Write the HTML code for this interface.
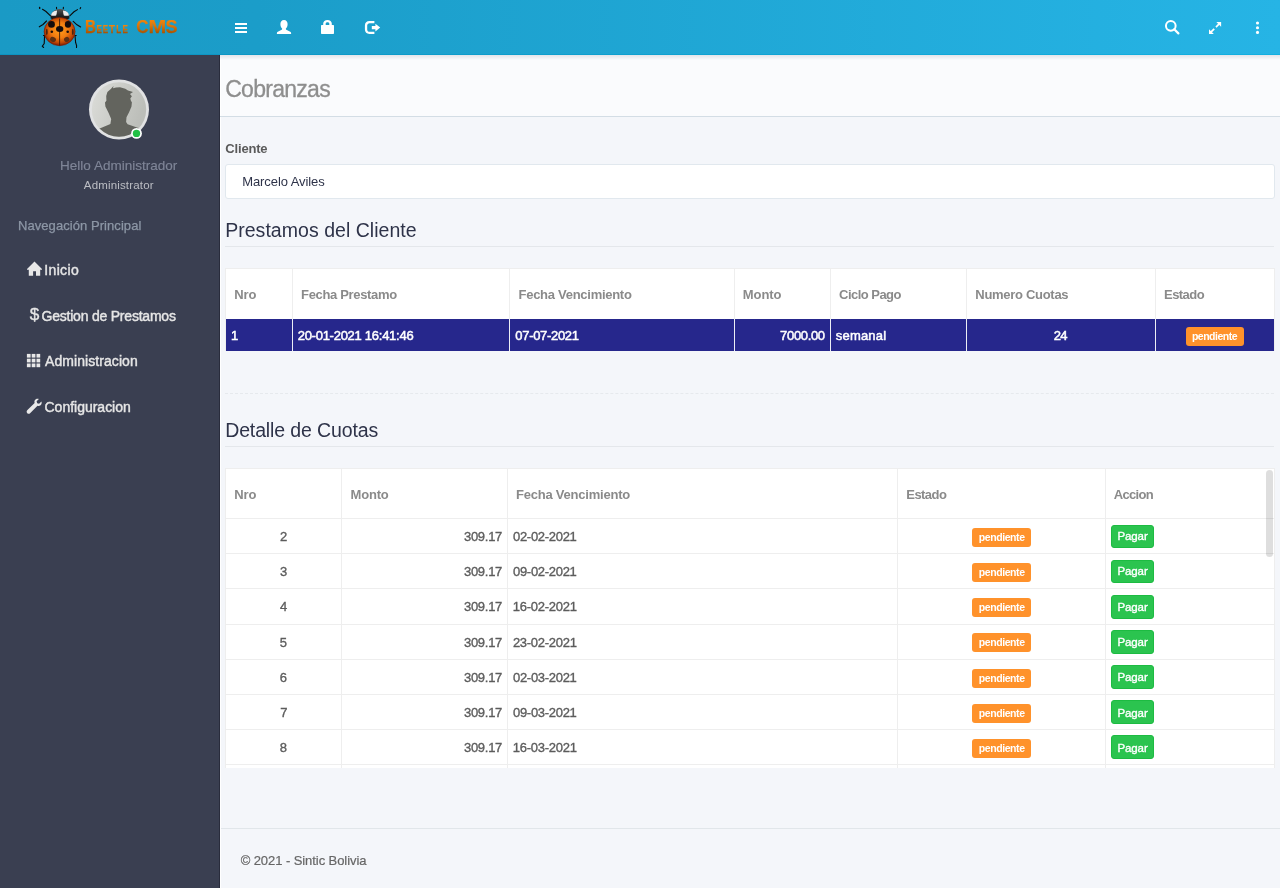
<!DOCTYPE html>
<html lang="es">
<head>
<meta charset="utf-8">
<title>Cobranzas</title>
<style>
*{box-sizing:border-box;margin:0;padding:0}
html,body{width:1280px;height:888px;overflow:hidden}
body{font-family:"Liberation Sans",sans-serif;font-size:13px;color:#5a5a5a;background:#f4f6fa;position:relative}
.t{position:absolute;white-space:nowrap;line-height:1;display:block}
#hdr{position:absolute;left:0;top:0;width:1280px;height:55px;background:linear-gradient(90deg,#1a9ac5 0%,#1b9dc9 20%,#26b4e5 100%)}
#hdrl{position:absolute;left:0;top:54px;width:1280px;height:1px;background:linear-gradient(90deg,#0c93c0 0%,#0c97c5 20%,#12b0e1 100%)}
#side{position:absolute;left:0;top:55px;width:220px;height:833px;background:#3a3f51;border-right:1px solid #292c3c}
#wl{position:absolute;left:220px;top:55px;width:1px;height:833px;background:#fff}
#phead{position:absolute;left:221px;top:55px;width:1059px;height:62px;background:#fafbfd;border-bottom:1px solid #d3dde5}
#pshadow{position:absolute;left:220px;top:55px;width:1060px;height:5px;background:linear-gradient(#e2e4e9,rgba(250,251,253,0))}
.hr{position:absolute;left:225px;width:1049px;height:1px;background:#e4e7eb}
#inp{position:absolute;left:225px;top:164px;width:1050px;height:35px;background:#fff;border:1px solid #e1e8ee;border-radius:3px}
.box{position:absolute;background:#fff}
.vl{position:absolute;width:1px;background:#eee}
.hl{position:absolute;height:1px;background:#eee}
.badge{position:absolute;background:#ff922b;border-radius:3px}
.btn{position:absolute;background:#2bc44f;border:1px solid #1dbb42;border-radius:3px}
svg{position:absolute;overflow:visible}
</style>
</head>
<body>
<div id="hdr"></div><div id="hdrl"></div>
<div id="side"></div>
<div id="wl"></div>
<div id="phead"></div>
<div id="pshadow"></div>
<div style="position:absolute;left:220px;top:116px;width:1px;height:1px;background:#d3dde5"></div>
<div class="hr" style="top:246px"></div>
<div class="hr" style="top:446px"></div>
<div class="hr" style="top:828px;left:221px;width:1059px;background:#e1e6ea"></div>
<div id="inp"></div>

<div style="position:absolute;left:225px;top:393px;width:1049px;height:0;border-top:1px dashed #e6e9ed"></div>
<div class="box" style="left:225px;top:268px;width:1050px;height:83px;border:1px solid #eee"></div>
<div style="position:absolute;left:226px;top:319px;width:1048px;height:32px;background:#26278c"></div>
<div class="vl" style="left:292px;top:269px;height:50px"></div>
<div class="vl" style="left:292px;top:319px;height:32px;background:#eceef5"></div>
<div class="vl" style="left:509px;top:269px;height:50px"></div>
<div class="vl" style="left:509px;top:319px;height:32px;background:#eceef5"></div>
<div class="vl" style="left:734px;top:269px;height:50px"></div>
<div class="vl" style="left:734px;top:319px;height:32px;background:#eceef5"></div>
<div class="vl" style="left:830px;top:269px;height:50px"></div>
<div class="vl" style="left:830px;top:319px;height:32px;background:#eceef5"></div>
<div class="vl" style="left:966px;top:269px;height:50px"></div>
<div class="vl" style="left:966px;top:319px;height:32px;background:#eceef5"></div>
<div class="vl" style="left:1155px;top:269px;height:50px"></div>
<div class="vl" style="left:1155px;top:319px;height:32px;background:#eceef5"></div>
<div class="badge" style="left:1186px;top:327px;width:58px;height:19px"></div>
<div class="box" style="left:225px;top:468px;width:1050px;height:300px;border:1px solid #eee;border-bottom:0"></div>
<div class="vl" style="left:341px;top:469px;height:299px"></div>
<div class="vl" style="left:507px;top:469px;height:299px"></div>
<div class="vl" style="left:897px;top:469px;height:299px"></div>
<div class="vl" style="left:1105px;top:469px;height:299px"></div>
<div class="hl" style="left:226px;top:518px;width:1048px"></div>
<div class="hl" style="left:226px;top:553px;width:1048px"></div>
<div class="hl" style="left:226px;top:588px;width:1048px"></div>
<div class="hl" style="left:226px;top:624px;width:1048px"></div>
<div class="hl" style="left:226px;top:659px;width:1048px"></div>
<div class="hl" style="left:226px;top:694px;width:1048px"></div>
<div class="hl" style="left:226px;top:729px;width:1048px"></div>
<div class="hl" style="left:226px;top:764px;width:1048px"></div>
<div class="badge" style="left:972px;top:528px;width:59px;height:19px"></div>
<div class="btn" style="left:1111px;top:525px;width:43px;height:23px"></div>
<div class="badge" style="left:972px;top:563px;width:59px;height:19px"></div>
<div class="btn" style="left:1111px;top:560px;width:43px;height:23px"></div>
<div class="badge" style="left:972px;top:598px;width:59px;height:19px"></div>
<div class="btn" style="left:1111px;top:595px;width:43px;height:24px"></div>
<div class="badge" style="left:972px;top:633px;width:59px;height:19px"></div>
<div class="btn" style="left:1111px;top:630px;width:43px;height:24px"></div>
<div class="badge" style="left:972px;top:669px;width:59px;height:19px"></div>
<div class="btn" style="left:1111px;top:665px;width:43px;height:24px"></div>
<div class="badge" style="left:972px;top:704px;width:59px;height:19px"></div>
<div class="btn" style="left:1111px;top:700px;width:43px;height:24px"></div>
<div class="badge" style="left:972px;top:739px;width:59px;height:19px"></div>
<div class="btn" style="left:1111px;top:735px;width:43px;height:24px"></div>
<div style="position:absolute;left:1266px;top:470px;width:7px;height:87px;border-radius:4px;background:rgba(0,0,0,.13)"></div>
<div id="tx" style="position:absolute;left:0;top:0;width:1280px;height:888px;will-change:transform">
<div class="t" id="t0" style="left:60.11px;top:159.00px;font-size:13.5px;color:#7f8597;-webkit-text-stroke:0.15px #7f8597">Hello Administrador</div>
<div class="t" id="t1" style="left:83.80px;top:180.00px;font-size:11.5px;color:#bcbec4;letter-spacing:0.166px">Administrator</div>
<div class="t" id="t2" style="left:17.99px;top:219.00px;font-size:13px;color:#8d97a6;-webkit-text-stroke:0.25px #8d97a6;letter-spacing:0.064px">Navegación Principal</div>
<div class="t" id="t3" style="left:44.31px;top:263.00px;font-size:14px;color:#e6e6e6;-webkit-text-stroke:0.42px #e6e6e6;letter-spacing:0.337px">Inicio</div>
<div class="t" id="t4" style="left:41.50px;top:309.00px;font-size:14px;color:#e6e6e6;-webkit-text-stroke:0.42px #e6e6e6;letter-spacing:-0.215px">Gestion de Prestamos</div>
<div class="t" id="t5" style="left:45.10px;top:354.00px;font-size:14px;color:#e6e6e6;-webkit-text-stroke:0.42px #e6e6e6;letter-spacing:0.063px">Administracion</div>
<div class="t" id="t6" style="left:44.50px;top:400.00px;font-size:14px;color:#e6e6e6;-webkit-text-stroke:0.42px #e6e6e6;letter-spacing:-0.008px">Configuracion</div>
<div class="t" id="t7" style="left:225.17px;top:78.00px;font-size:23px;color:#8e8e8e;-webkit-text-stroke:0.3px #8e8e8e;letter-spacing:-0.716px">Cobranzas</div>
<div class="t" id="t8" style="left:225.36px;top:142.00px;font-size:13px;color:#5a5a5a;font-weight:bold;letter-spacing:-0.197px">Cliente</div>
<div class="t" id="t9" style="left:242.21px;top:175.00px;font-size:13px;color:#2e3349;letter-spacing:-0.081px">Marcelo Aviles</div>
<div class="t" id="t10" style="left:225.18px;top:221.00px;font-size:19.5px;color:#2e3349;letter-spacing:0.036px">Prestamos del Cliente</div>
<div class="t" id="t11" style="left:225.18px;top:421.00px;font-size:19.5px;color:#2e3349;letter-spacing:-0.122px">Detalle de Cuotas</div>
<div class="t" id="t12" style="left:240.65px;top:854.00px;font-size:13px;color:#666;-webkit-text-stroke:0.2px #666;letter-spacing:-0.069px">© 2021 - Sintic Bolivia</div>
<div class="t" id="t13" style="left:234.29px;top:288.00px;font-size:13px;color:#8a8a8a;font-weight:bold;letter-spacing:-0.111px">Nro</div>
<div class="t" id="t14" style="left:301.04px;top:288.00px;font-size:13px;color:#8a8a8a;font-weight:bold;letter-spacing:-0.337px">Fecha Prestamo</div>
<div class="t" id="t15" style="left:518.54px;top:288.00px;font-size:13px;color:#8a8a8a;font-weight:bold;letter-spacing:-0.277px">Fecha Vencimiento</div>
<div class="t" id="t16" style="left:742.79px;top:288.00px;font-size:13px;color:#8a8a8a;font-weight:bold;letter-spacing:-0.064px">Monto</div>
<div class="t" id="t17" style="left:839.11px;top:288.00px;font-size:13px;color:#8a8a8a;font-weight:bold;letter-spacing:-0.535px">Ciclo Pago</div>
<div class="t" id="t18" style="left:975.29px;top:288.00px;font-size:13px;color:#8a8a8a;font-weight:bold;letter-spacing:-0.291px">Numero Cuotas</div>
<div class="t" id="t19" style="left:1164.04px;top:288.00px;font-size:13px;color:#8a8a8a;font-weight:bold;letter-spacing:-0.547px">Estado</div>
<div class="t" id="t20" style="left:230.91px;top:329.00px;font-size:13px;color:#ffffff;-webkit-text-stroke:0.5px #ffffff">1</div>
<div class="t" id="t21" style="left:297.70px;top:329.00px;font-size:13px;color:#ffffff;-webkit-text-stroke:0.5px #ffffff;letter-spacing:-0.266px">20-01-2021 16:41:46</div>
<div class="t" id="t22" style="left:515.34px;top:329.00px;font-size:13px;color:#ffffff;-webkit-text-stroke:0.5px #ffffff;letter-spacing:-0.316px">07-07-2021</div>
<div class="t" id="t23" style="left:780.12px;top:329.00px;font-size:13px;color:#ffffff;-webkit-text-stroke:0.5px #ffffff;letter-spacing:-0.335px">7000.00</div>
<div class="t" id="t24" style="left:835.81px;top:329.00px;font-size:13px;color:#ffffff;-webkit-text-stroke:0.5px #ffffff;letter-spacing:0.191px">semanal</div>
<div class="t" id="t25" style="left:1053.70px;top:329.00px;font-size:13px;color:#ffffff;-webkit-text-stroke:0.5px #ffffff;letter-spacing:-0.775px">24</div>
<div class="t" id="t26" style="left:234.29px;top:488.00px;font-size:13px;color:#8a8a8a;font-weight:bold;letter-spacing:-0.111px">Nro</div>
<div class="t" id="t27" style="left:350.54px;top:488.00px;font-size:13px;color:#8a8a8a;font-weight:bold;letter-spacing:-0.186px">Monto</div>
<div class="t" id="t28" style="left:516.04px;top:488.00px;font-size:13px;color:#8a8a8a;font-weight:bold;letter-spacing:-0.226px">Fecha Vencimiento</div>
<div class="t" id="t29" style="left:906.29px;top:488.00px;font-size:13px;color:#8a8a8a;font-weight:bold;letter-spacing:-0.547px">Estado</div>
<div class="t" id="t30" style="left:1113.82px;top:488.00px;font-size:13px;color:#8a8a8a;font-weight:bold;letter-spacing:-0.692px">Accion</div>
<div class="t" id="t31" style="left:280.08px;top:530.00px;font-size:13px;color:#5c5c5c;-webkit-text-stroke:0.35px #5c5c5c">2</div>
<div class="t" id="t32" style="left:463.95px;top:530.00px;font-size:13px;color:#5c5c5c;-webkit-text-stroke:0.35px #5c5c5c;letter-spacing:-0.269px">309.17</div>
<div class="t" id="t33" style="left:513.03px;top:530.00px;font-size:13px;color:#5c5c5c;-webkit-text-stroke:0.35px #5c5c5c;letter-spacing:-0.302px">02-02-2021</div>
<div class="t" id="t34" style="left:280.11px;top:565.00px;font-size:13px;color:#5c5c5c;-webkit-text-stroke:0.35px #5c5c5c">3</div>
<div class="t" id="t35" style="left:463.95px;top:565.00px;font-size:13px;color:#5c5c5c;-webkit-text-stroke:0.35px #5c5c5c;letter-spacing:-0.269px">309.17</div>
<div class="t" id="t36" style="left:513.03px;top:565.00px;font-size:13px;color:#5c5c5c;-webkit-text-stroke:0.35px #5c5c5c;letter-spacing:-0.302px">09-02-2021</div>
<div class="t" id="t37" style="left:279.88px;top:600.00px;font-size:13px;color:#5c5c5c;-webkit-text-stroke:0.35px #5c5c5c">4</div>
<div class="t" id="t38" style="left:463.95px;top:600.00px;font-size:13px;color:#5c5c5c;-webkit-text-stroke:0.35px #5c5c5c;letter-spacing:-0.269px">309.17</div>
<div class="t" id="t39" style="left:512.78px;top:600.00px;font-size:13px;color:#5c5c5c;-webkit-text-stroke:0.35px #5c5c5c;letter-spacing:-0.248px">16-02-2021</div>
<div class="t" id="t40" style="left:279.83px;top:636.00px;font-size:13px;color:#5c5c5c;-webkit-text-stroke:0.35px #5c5c5c">5</div>
<div class="t" id="t41" style="left:463.95px;top:636.00px;font-size:13px;color:#5c5c5c;-webkit-text-stroke:0.35px #5c5c5c;letter-spacing:-0.269px">309.17</div>
<div class="t" id="t42" style="left:512.91px;top:636.00px;font-size:13px;color:#5c5c5c;-webkit-text-stroke:0.35px #5c5c5c;letter-spacing:-0.282px">23-02-2021</div>
<div class="t" id="t43" style="left:279.85px;top:671.00px;font-size:13px;color:#5c5c5c;-webkit-text-stroke:0.35px #5c5c5c">6</div>
<div class="t" id="t44" style="left:463.95px;top:671.00px;font-size:13px;color:#5c5c5c;-webkit-text-stroke:0.35px #5c5c5c;letter-spacing:-0.269px">309.17</div>
<div class="t" id="t45" style="left:513.03px;top:671.00px;font-size:13px;color:#5c5c5c;-webkit-text-stroke:0.35px #5c5c5c;letter-spacing:-0.302px">02-03-2021</div>
<div class="t" id="t46" style="left:280.19px;top:706.00px;font-size:13px;color:#5c5c5c;-webkit-text-stroke:0.35px #5c5c5c">7</div>
<div class="t" id="t47" style="left:463.95px;top:706.00px;font-size:13px;color:#5c5c5c;-webkit-text-stroke:0.35px #5c5c5c;letter-spacing:-0.269px">309.17</div>
<div class="t" id="t48" style="left:513.03px;top:706.00px;font-size:13px;color:#5c5c5c;-webkit-text-stroke:0.35px #5c5c5c;letter-spacing:-0.302px">09-03-2021</div>
<div class="t" id="t49" style="left:279.83px;top:741.00px;font-size:13px;color:#5c5c5c;-webkit-text-stroke:0.35px #5c5c5c">8</div>
<div class="t" id="t50" style="left:463.95px;top:741.00px;font-size:13px;color:#5c5c5c;-webkit-text-stroke:0.35px #5c5c5c;letter-spacing:-0.269px">309.17</div>
<div class="t" id="t51" style="left:512.78px;top:741.00px;font-size:13px;color:#5c5c5c;-webkit-text-stroke:0.35px #5c5c5c;letter-spacing:-0.248px">16-03-2021</div>
<div class="t" id="t52" style="left:1191.89px;top:331.00px;font-size:10.5px;color:#fff;font-weight:bold;letter-spacing:-0.485px">pendiente</div>
<div class="t" id="t53" style="left:978.79px;top:532.00px;font-size:10.5px;color:#fff;font-weight:bold;letter-spacing:-0.417px">pendiente</div>
<div class="t" id="t54" style="left:1117.42px;top:531.00px;font-size:11.5px;color:#fff;-webkit-text-stroke:0.35px #fff;letter-spacing:-0.086px">Pagar</div>
<div class="t" id="t55" style="left:978.79px;top:567.00px;font-size:10.5px;color:#fff;font-weight:bold;letter-spacing:-0.417px">pendiente</div>
<div class="t" id="t56" style="left:1117.42px;top:566.00px;font-size:11.5px;color:#fff;-webkit-text-stroke:0.35px #fff;letter-spacing:-0.086px">Pagar</div>
<div class="t" id="t57" style="left:978.79px;top:602.00px;font-size:10.5px;color:#fff;font-weight:bold;letter-spacing:-0.417px">pendiente</div>
<div class="t" id="t58" style="left:1117.42px;top:602.00px;font-size:11.5px;color:#fff;-webkit-text-stroke:0.35px #fff;letter-spacing:-0.086px">Pagar</div>
<div class="t" id="t59" style="left:978.79px;top:637.00px;font-size:10.5px;color:#fff;font-weight:bold;letter-spacing:-0.417px">pendiente</div>
<div class="t" id="t60" style="left:1117.42px;top:637.00px;font-size:11.5px;color:#fff;-webkit-text-stroke:0.35px #fff;letter-spacing:-0.086px">Pagar</div>
<div class="t" id="t61" style="left:978.79px;top:673.00px;font-size:10.5px;color:#fff;font-weight:bold;letter-spacing:-0.417px">pendiente</div>
<div class="t" id="t62" style="left:1117.42px;top:672.00px;font-size:11.5px;color:#fff;-webkit-text-stroke:0.35px #fff;letter-spacing:-0.086px">Pagar</div>
<div class="t" id="t63" style="left:978.79px;top:708.00px;font-size:10.5px;color:#fff;font-weight:bold;letter-spacing:-0.417px">pendiente</div>
<div class="t" id="t64" style="left:1117.42px;top:708.00px;font-size:11.5px;color:#fff;-webkit-text-stroke:0.35px #fff;letter-spacing:-0.086px">Pagar</div>
<div class="t" id="t65" style="left:978.79px;top:743.00px;font-size:10.5px;color:#fff;font-weight:bold;letter-spacing:-0.417px">pendiente</div>
<div class="t" id="t66" style="left:1117.42px;top:743.00px;font-size:11.5px;color:#fff;-webkit-text-stroke:0.35px #fff;letter-spacing:-0.086px">Pagar</div>
</div>
<svg width="1280" height="888" viewBox="0 0 1280 888" style="left:0;top:0;will-change:transform">
<defs>
<linearGradient id="gt" x1="0" y1="0" x2="0" y2="1"><stop offset="0" stop-color="#ff8f0c"/><stop offset="0.45" stop-color="#e07608"/><stop offset="1" stop-color="#8f4300"/></linearGradient>
<radialGradient id="gb" cx="0.5" cy="0.45" r="0.55"><stop offset="0" stop-color="#ff9c1c"/><stop offset="0.5" stop-color="#f07c10"/><stop offset="0.8" stop-color="#c24a06"/><stop offset="1" stop-color="#7e1a00"/></radialGradient>
<linearGradient id="gh" x1="0" y1="0" x2="0" y2="1"><stop offset="0" stop-color="#555"/><stop offset="0.5" stop-color="#2a2a2a"/><stop offset="1" stop-color="#111"/></linearGradient>
<linearGradient id="ga" x1="0" y1="0" x2="1" y2="0.3"><stop offset="0" stop-color="#dcddd9"/><stop offset="1" stop-color="#bcbeb9"/></linearGradient>
<clipPath id="ca"><circle cx="119" cy="109.5" r="27.2"/></clipPath>
</defs>
<!-- ladybug -->
<g stroke="#0a0a0a" stroke-width="1.1" fill="none" stroke-linecap="round">
<path d="M50.5 15.8 L46 11.5 L42.5 9.3"/><path d="M39.6 7.4 L39.7 8.4" stroke-width="1.4"/>
<path d="M69.8 15.8 L74 11.8 L77.5 9.6"/><path d="M80.6 7.6 L80.2 8.6" stroke-width="1.2"/>
<path d="M56.5 7.2 L56.6 8.8"/><path d="M63.4 7.2 L63.3 8.8"/>
<path d="M46.5 21 L43 24.5 L39.3 26.8"/>
<path d="M73.2 21.4 L77 24.8 L80.6 27"/>
<path d="M43.5 35.5 L44.6 35.6 L44.2 43.5 L42.3 46.2 L43.6 47.5"/>
<path d="M76.2 35.5 L75 35.6 L75.6 42.5 L76.6 45.5 L76.5 47.5"/>
</g>
<path d="M50.6 18.5 C50.5 13 54 9.2 59.8 9 C65.5 9.2 69.5 13 69.4 18.5 C66 20 54 20 50.6 18.5Z" fill="url(#gh)"/>
<path d="M51 15.4 C51.3 12.8 53.4 10.8 57 10.5 C57 12.2 56.6 14.2 56.1 15.6 C54.5 15.9 52.5 15.8 51 15.4Z" fill="#ececec"/>
<path d="M69 15.4 C68.7 12.8 66.6 10.8 63 10.5 C63 12.2 63.4 14.2 63.9 15.6 C65.5 15.9 67.5 15.8 69 15.4Z" fill="#ececec"/>
<ellipse cx="59.6" cy="31.6" rx="15.5" ry="14.1" fill="url(#gb)" stroke="#7a1500" stroke-width="0.6"/>
<path d="M59.6 18.5 V45.5" stroke="#3a1a08" stroke-width="0.9"/>
<g fill="#140c0c">
<ellipse cx="51.5" cy="24.4" rx="3.4" ry="3.3"/><ellipse cx="68" cy="24.4" rx="3.1" ry="3.3"/>
<ellipse cx="59.7" cy="28.9" rx="3.7" ry="3"/>
<circle cx="51.8" cy="31.7" r="1.3"/><circle cx="67.7" cy="31.7" r="1.3"/>
</g>
<g fill="#4a2410"><ellipse cx="46.8" cy="32" rx="0.9" ry="3.2"/><ellipse cx="72.8" cy="32" rx="0.9" ry="3.2"/></g>
<g fill="#5c3014"><ellipse cx="53" cy="39.4" rx="3" ry="2.5" transform="rotate(25 53 39.4)"/><ellipse cx="66.7" cy="39.4" rx="2.7" ry="2.5" transform="rotate(-25 66.7 39.4)"/></g>
<!-- logo text -->
<g font-family="Liberation Sans, sans-serif" font-weight="bold" fill="url(#gt)" stroke="url(#gt)" stroke-width="0.25" stroke-linejoin="round">
<text x="85" y="32.9" font-size="18.5" textLength="11" lengthAdjust="spacingAndGlyphs">B</text>
<text x="96.4" y="32.9" font-size="11.2" textLength="5.4" lengthAdjust="spacingAndGlyphs">E</text>
<text x="102.8" y="32.9" font-size="11.2" textLength="5.4" lengthAdjust="spacingAndGlyphs">E</text>
<text x="109" y="32.9" font-size="11.2" textLength="6" lengthAdjust="spacingAndGlyphs">T</text>
<text x="116.3" y="32.9" font-size="11.2" textLength="5" lengthAdjust="spacingAndGlyphs">L</text>
<text x="122.5" y="32.9" font-size="11.2" textLength="5.4" lengthAdjust="spacingAndGlyphs">E</text>
<text x="136.2" y="32.9" font-size="18.5" textLength="12.2" lengthAdjust="spacingAndGlyphs">C</text>
<text x="148.6" y="32.9" font-size="18.5" textLength="17.8" lengthAdjust="spacingAndGlyphs">M</text>
<text x="165.6" y="32.9" font-size="18.5" textLength="12" lengthAdjust="spacingAndGlyphs">S</text>
</g>
<!-- header icons -->
<g fill="#fff">
<rect x="235" y="23" width="12" height="2"/><rect x="235" y="27" width="12" height="2"/><rect x="235" y="31" width="12" height="2"/>
<path d="M284 19.9 C286.3 19.9 287.6 21.6 287.6 24 C287.6 26 286.9 27.6 285.9 28.5 C285.7 29.3 286 29.7 286.8 30.1 L290.2 31.7 C290.8 32 291.1 32.4 291.1 33 V34 H276.9 V33 C276.9 32.4 277.2 32 277.8 31.7 L281.2 30.1 C282 29.7 282.3 29.3 282.1 28.5 C281.1 27.6 280.4 26 280.4 24 C280.4 21.6 281.7 19.9 284 19.9Z"/>
<path d="M322 25 H333 C333.6 25 334 25.4 334 26 V33 C334 33.6 333.6 34 333 34 H322 C321.4 34 321 33.6 321 33 V26 C321 25.4 321.4 25 322 25Z"/>
<path d="M323.2 25.5 V23.6 C323.2 21.3 325 19.9 327.5 19.9 C330 19.9 331.8 21.3 331.8 23.6 V25.5 H329.3 V23.8 C329.3 22.8 328.6 22.3 327.5 22.3 C326.4 22.3 325.7 22.8 325.7 23.8 V25.5Z"/>
<path d="M374.4 21 V23.2 H369.6 C368.2 23.2 367.2 24.1 367.2 25.6 V29.4 C367.2 30.9 368.2 31.8 369.6 31.8 H374.4 V34 H369.4 C366.7 34 364.9 32.2 364.9 29.6 V25.4 C364.9 22.8 366.7 21 369.4 21Z"/>
<path d="M371.8 26 H375.4 V23.8 L380.2 27.6 L375.4 31.4 V29.2 H371.8Z"/>
</g>
<circle cx="1170.8" cy="25.8" r="4.85" fill="none" stroke="#fff" stroke-width="2"/>
<path d="M1174.2 29.2 L1178.4 33.4" stroke="#fff" stroke-width="2.2" stroke-linecap="round"/>
<g fill="#fff">
<path d="M1216.3 22 H1221.1 V26.8Z"/><path d="M1209 29.3 V34.1 H1213.8Z"/>
<path d="M1219.3 22.6 L1220.5 23.8 L1216.6 27.7 L1215.4 26.5Z"/><path d="M1213.6 28.3 L1214.8 29.5 L1211 33.3 L1209.8 32.1Z"/>
<circle cx="1257.5" cy="23" r="1.55"/><circle cx="1257.5" cy="27.7" r="1.55"/><circle cx="1257.5" cy="32.4" r="1.55"/>
</g>
<!-- avatar -->
<circle cx="119" cy="109.5" r="30" fill="#e1e2e3"/>
<circle cx="119" cy="109.5" r="27.2" fill="url(#ga)"/>
<g clip-path="url(#ca)"><path fill="#63645e" d="M113.5 86 L113 88.3 L116 87.6 L120 87.3 L125.3 88.8 L128 90.5 L133 92.1 L130 94 L131.9 96.3 L130.3 98.5 L131 101 L131.9 102.2 L131.5 106.6 L129.2 112 L126.5 117.3 L126.1 122 L127.6 124.2 L137 127.4 L145 131 V140 H93 V131 L99.7 128.4 L110.4 123.9 L111.2 118.9 L108.5 112.8 L105.4 106.6 L105 102.4 L106.4 100.8 L106.2 95.9 L107.4 92.1 L110.8 89Z"/></g>
<circle cx="136.5" cy="133.4" r="5.4" fill="#fff"/><circle cx="136.5" cy="133.4" r="3.7" fill="#22c045"/>
<!-- sidebar icons -->
<g fill="#e8e8e8">
<path d="M34.5 261.5 L42 269 V269.8 H40.2 V275.8 H36 V271.2 H33.1 V275.8 H28.8 V269.8 H27 V269Z"/>
<g>
<rect x="26.9" y="353.9" width="3.7" height="3.7"/><rect x="31.7" y="353.9" width="3.7" height="3.7"/><rect x="36.5" y="353.9" width="3.7" height="3.7"/>
<rect x="26.9" y="358.7" width="3.7" height="3.7"/><rect x="31.7" y="358.7" width="3.7" height="3.7"/><rect x="36.5" y="358.7" width="3.7" height="3.7"/>
<rect x="26.9" y="363.5" width="3.7" height="3.7"/><rect x="31.7" y="363.5" width="3.7" height="3.7"/><rect x="36.5" y="363.5" width="3.7" height="3.7"/>
</g>
<path d="M27.2 410.3 L34.6 402.9 C34.1 401.2 34.6 399.9 35.8 399.2 C36.8 398.6 38 398.6 38.9 399 L36.6 401.3 L37.2 403.2 L39.1 403.8 L41.4 401.5 C41.8 402.4 41.8 403.6 41.2 404.6 C40.5 405.8 39.2 406.3 37.5 405.8 L30.1 413.2 C29.3 414 28.1 414 27.3 413.2 C26.5 412.4 26.4 411.1 27.2 410.3Z"/>
</g>
<text x="29.8" y="320.4" font-family="Liberation Sans, sans-serif" font-size="17.2" fill="#e6e6e6" stroke="#e6e6e6" stroke-width="0.35">$</text>
</svg>

</body>
</html>
